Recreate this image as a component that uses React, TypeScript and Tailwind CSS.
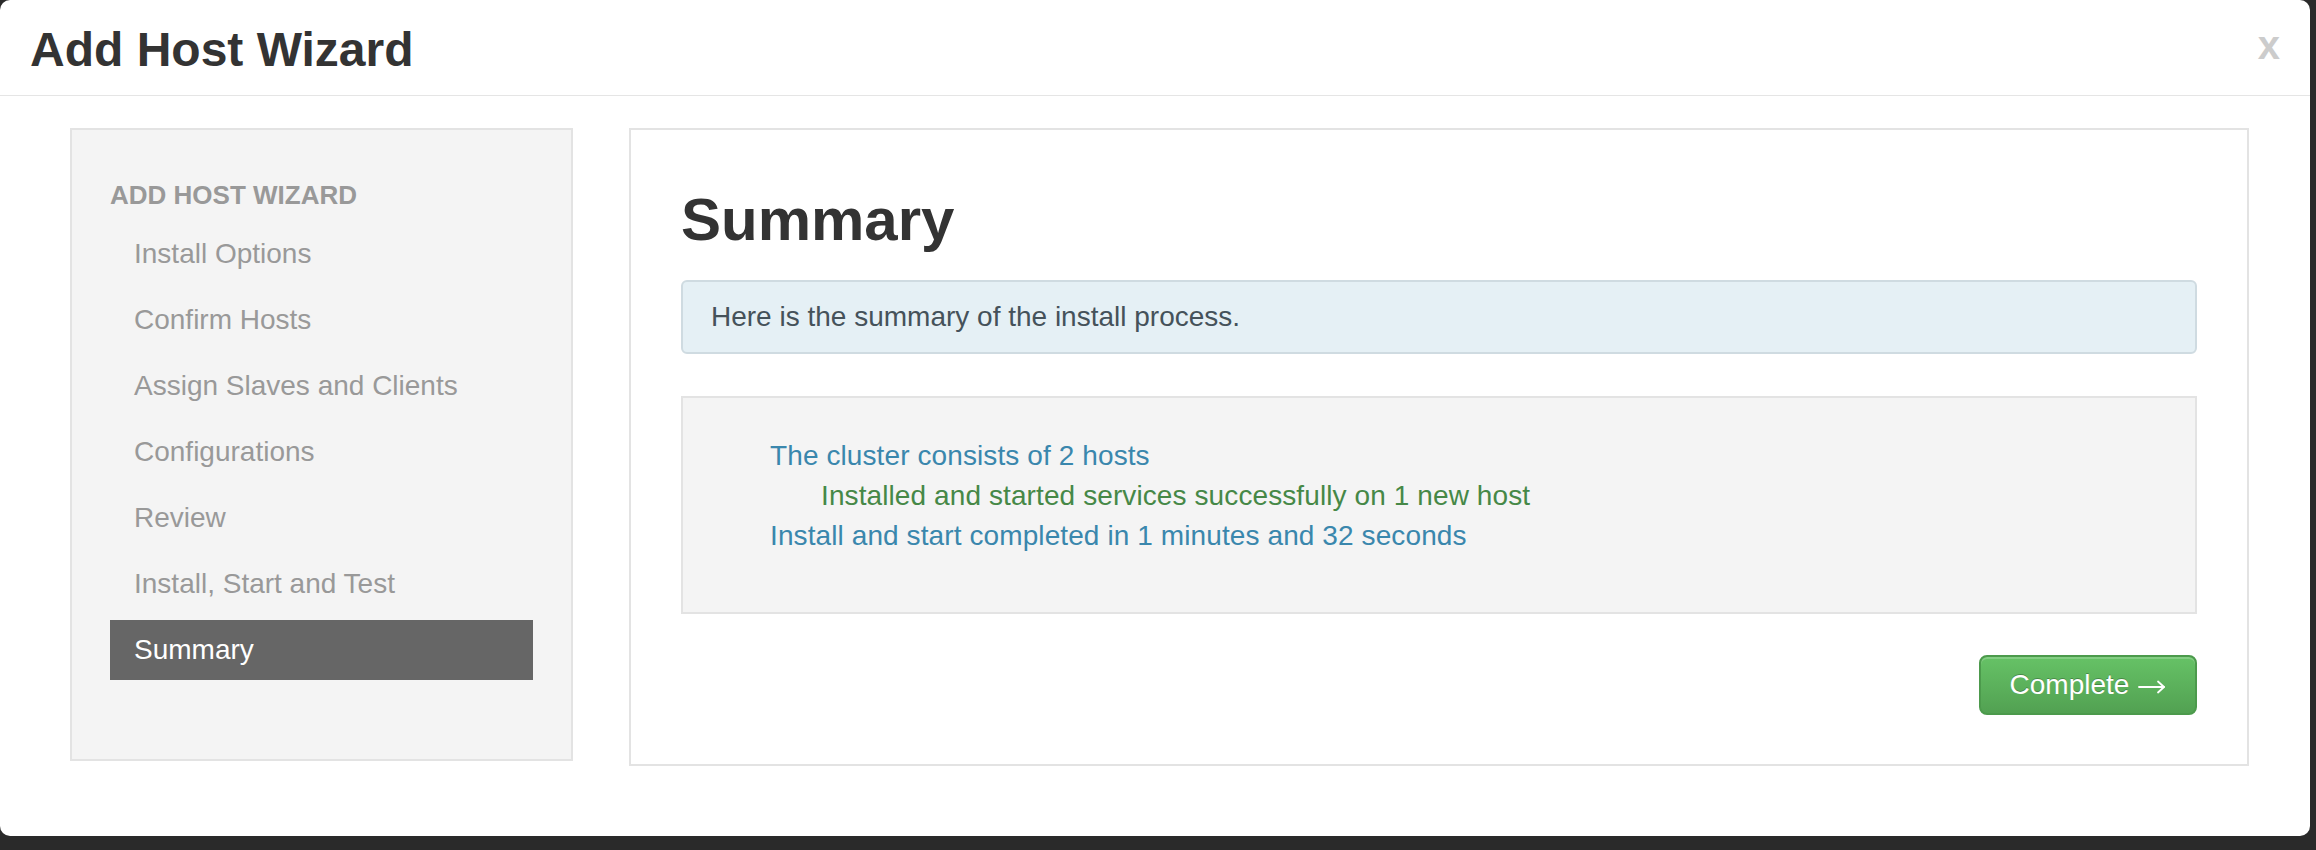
import React from 'react';

const steps = [
  'Install Options',
  'Confirm Hosts',
  'Assign Slaves and Clients',
  'Configurations',
  'Review',
  'Install, Start and Test',
  'Summary',
];

const App: React.FC = () => {
  const active = steps.length - 1;

  return (
    <div className="h-[850px] w-full bg-[#2a2a2a] font-['Liberation_Sans',Arial,sans-serif]">
      <div className="w-[2310px] h-[836px] bg-white rounded-[10px] flex flex-col">
        {/* header */}
        <div className="h-[96px] border-b border-[#e5e5e5] flex items-center justify-between pl-[30px] pr-[30px]">
          <h3 className="text-[48px] leading-[55px] font-bold text-[#333333] pt-[4px]">Add Host Wizard</h3>
          <button className="text-[40px] leading-none font-bold text-[#cccccc] pb-[6px]">x</button>
        </div>

        {/* body */}
        <div className="flex items-start gap-[56px] pt-[32px] pl-[70px]">
          <div className="w-[503px] bg-[#f4f4f4] border-2 border-[#e3e3e3] pt-[45px] pb-[79px] px-[38px]">
            <div className="text-[26px] leading-[40px] font-bold uppercase text-[#999999] mb-[9px]">
              Add Host Wizard
            </div>
            <ul className="flex flex-col gap-[6px]">
              {steps.map((s, i) => (
                <li
                  key={s}
                  className={`h-[60px] flex items-center pl-[24px] text-[28px] ${
                    i === active ? 'bg-[#666666] text-white' : 'text-[#999999]'
                  }`}
                >
                  {s}
                </li>
              ))}
            </ul>
          </div>

          <div className="w-[1620px] bg-white border-2 border-[#e3e3e3] pt-[57px] pb-[49px] px-[50px]">
            <h1 className="text-[60px] leading-[66px] font-bold text-[#333333]">Summary</h1>
            <div className="mt-[27px] rounded-[6px] border-2 border-[#cfdbe1] bg-[#e5f0f5] px-[28px] py-[15px] text-[28px] leading-[40px] text-[#45525a]">
              Here is the summary of the install process.
            </div>
            <div className="mt-[42px] bg-[#f4f4f4] border-2 border-[#e3e3e3] pt-[38px] pb-[56px] pl-[87px] text-[28px] leading-[40px] tracking-[0.1px]">
              <div className="text-[#3a87ad]">The cluster consists of 2 hosts</div>
              <div className="text-[#468847] pl-[51px]">Installed and started services successfully on 1 new host</div>
              <div className="text-[#3a87ad]">Install and start completed in 1 minutes and 32 seconds</div>
            </div>
            <div className="flex justify-end mt-[41px]">
              <button className="w-[218px] h-[60px] rounded-[8px] border-2 border-[#4c9a4c] bg-gradient-to-b from-[#66c266] to-[#52a152] text-white text-[28px] [text-shadow:0_-1px_0_rgba(0,0,0,0.25)] shadow-[inset_0_2px_0_rgba(255,255,255,0.2)] flex items-center justify-center gap-[9px]">
                <span>Complete</span>
                <svg width="28" height="16" viewBox="0 0 28 16" fill="none" stroke="white" strokeWidth="1.8" strokeLinecap="round" strokeLinejoin="round" className="mt-[3px]">
                  <path d="M1 8H26" />
                  <path d="M20 2.5L26 8L20 13.5" />
                </svg>
              </button>
            </div>
          </div>
        </div>
      </div>
    </div>
  );
};

export default App;
